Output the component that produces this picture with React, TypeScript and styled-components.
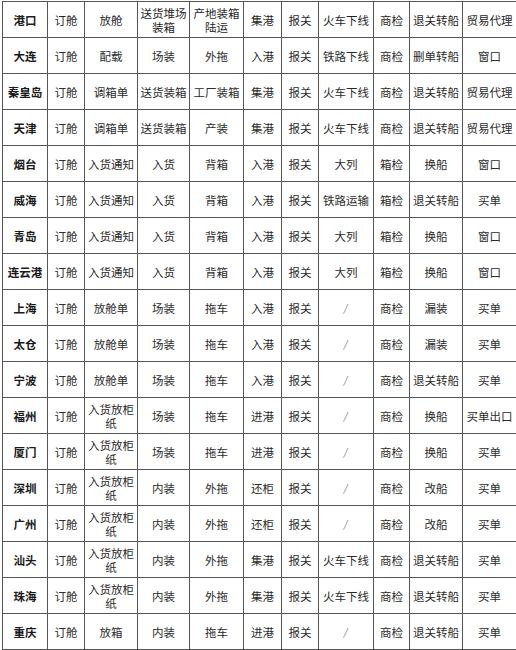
import styled, { createGlobalStyle } from 'styled-components';

const GlobalStyle = createGlobalStyle`
  html, body {
    margin: 0;
    padding: 0;
    background: #ffffff;
    overflow: hidden;
  }
  body {
    font-family: "Noto Sans CJK SC", "Noto Sans", sans-serif;
  }
`;

const Page = styled.div`
  padding: 1px 0 0 2px;
  width: 516px;
  box-sizing: border-box;
`;

const Table = styled.table`
  width: 514px;
  table-layout: fixed;
  border-collapse: collapse;
  font-size: 11.5px;
  line-height: 14px;
  color: #2b2b2b;
`;

const Col = styled.col<{ $w: number }>`
  width: ${(p) => p.$w}px;
`;

const Row = styled.tr`
  height: 36px;
`;

const Cell = styled.td<{ $lead?: boolean }>`
  border: 1.5px solid #555;
  padding: 0 2px;
  text-align: center;
  vertical-align: middle;
  font-weight: ${(p) => (p.$lead ? 700 : 400)};
  color: ${(p) => (p.$lead ? '#1a1a1a' : '#2b2b2b')};
`;

const HeadCell = styled.th<{ $lead?: boolean }>`
  border: 1.5px solid #555;
  padding: 0 2px;
  text-align: center;
  vertical-align: middle;
  font-weight: ${(p) => (p.$lead ? 700 : 400)};
  color: #1f1f1f;
`;

const Slash = styled.span`
  display: inline-block;
  font-size: 10px;
  color: #777;
  transform: skewX(-10deg);
`;

const widths = [45, 37, 53, 52, 54, 38, 37, 55, 36, 53, 54];

const headers = [
  '港口', '订舱', '放舱', '送货堆场装箱', '产地装箱陆运', '集港',
  '报关', '火车下线', '商检', '退关转船', '贸易代理',
];

const rows: string[][] = [
  ['大连', '订舱', '配载', '场装', '外拖', '入港', '报关', '铁路下线', '商检', '删单转船', '窗口'],
  ['秦皇岛', '订舱', '调箱单', '送货装箱', '工厂装箱', '集港', '报关', '火车下线', '商检', '退关转船', '贸易代理'],
  ['天津', '订舱', '调箱单', '送货装箱', '产装', '集港', '报关', '火车下线', '商检', '退关转船', '贸易代理'],
  ['烟台', '订舱', '入货通知', '入货', '背箱', '入港', '报关', '大列', '箱检', '换船', '窗口'],
  ['威海', '订舱', '入货通知', '入货', '背箱', '入港', '报关', '铁路运输', '箱检', '退关转船', '买单'],
  ['青岛', '订舱', '入货通知', '入货', '背箱', '入港', '报关', '大列', '箱检', '换船', '窗口'],
  ['连云港', '订舱', '入货通知', '入货', '背箱', '入港', '报关', '大列', '箱检', '换船', '窗口'],
  ['上海', '订舱', '放舱单', '场装', '拖车', '入港', '报关', '/', '商检', '漏装', '买单'],
  ['太仓', '订舱', '放舱单', '场装', '拖车', '入港', '报关', '/', '商检', '漏装', '买单'],
  ['宁波', '订舱', '放舱单', '场装', '拖车', '入港', '报关', '/', '商检', '退关转船', '买单'],
  ['福州', '订舱', '入货放柜纸', '场装', '拖车', '进港', '报关', '/', '商检', '换船', '买单出口'],
  ['厦门', '订舱', '入货放柜纸', '场装', '拖车', '进港', '报关', '/', '商检', '换船', '买单'],
  ['深圳', '订舱', '入货放柜纸', '内装', '外拖', '还柜', '报关', '/', '商检', '改船', '买单'],
  ['广州', '订舱', '入货放柜纸', '内装', '外拖', '还柜', '报关', '/', '商检', '改船', '买单'],
  ['汕头', '订舱', '入货放柜纸', '内装', '外拖', '集港', '报关', '火车下线', '商检', '退关转船', '买单'],
  ['珠海', '订舱', '入货放柜纸', '内装', '外拖', '集港', '报关', '火车下线', '商检', '退关转船', '买单'],
  ['重庆', '订舱', '放箱', '内装', '拖车', '进港', '报关', '/', '商检', '退关转船', '买单'],
];

export default function App() {
  return (
    <Page>
      <GlobalStyle />
      <Table>
        <colgroup>
          {widths.map((w, i) => (
            <Col key={i} $w={w} />
          ))}
        </colgroup>
        <thead>
          <Row>
            {headers.map((h, i) => (
              <HeadCell key={h} $lead={i === 0}>{h}</HeadCell>
            ))}
          </Row>
        </thead>
        <tbody>
          {rows.map((r) => (
            <Row key={r[0]}>
              {r.map((c, i) => (
                <Cell key={i} $lead={i === 0}>
                  {c === '/' ? <Slash>/</Slash> : c}
                </Cell>
              ))}
            </Row>
          ))}
        </tbody>
      </Table>
    </Page>
  );
}
